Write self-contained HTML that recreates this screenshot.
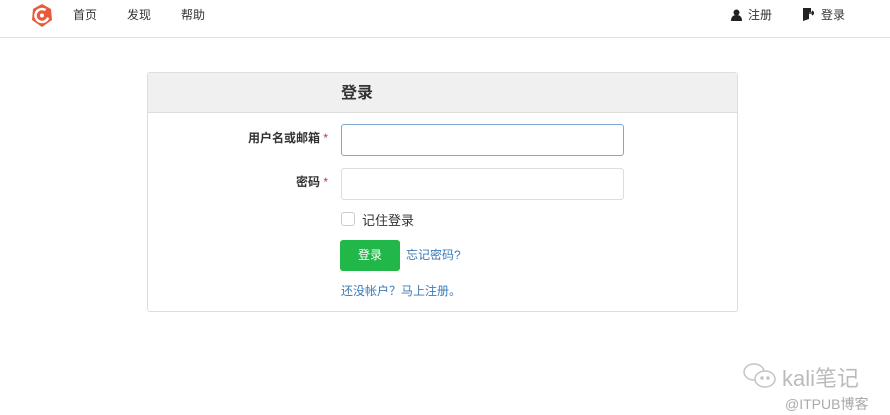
<!DOCTYPE html><html><head><meta charset="utf-8"><style>
*{margin:0;padding:0;box-sizing:border-box}
body{width:890px;height:415px;background:#fff;font-family:"Liberation Sans","Noto Sans CJK SC",sans-serif;font-size:12px;color:#333;position:relative;overflow:hidden}
.a{position:absolute}
.nav{top:0;left:0;width:890px;height:38px;border-bottom:1px solid #e2e2e2}
.card{left:147px;top:72px;width:591px;height:240px;border:1px solid #ddd;border-radius:3px}
.hd{height:40px;background:#f0f0f0;border-bottom:1px solid #ddd}
.inp{border:1px solid #ccc;border-radius:3px;width:283px;height:32px;left:341px}
.lab{font-weight:bold;font-size:12px;text-align:right;width:180px}
.lab b{color:#c33;font-weight:normal}
.link{color:#3a7ab8}
</style></head><body>
<div class="a nav"></div>
<svg class="a" style="left:31px;top:4px" width="22" height="23" viewBox="0 0 22 23"><polygon points="11,0 20,5 21,16 11,23 1,16 2,5" fill="#e85a3a"/><circle cx="11" cy="11.5" r="6.5" fill="none" stroke="#fff" stroke-width="2.5" stroke-dasharray="32 9" transform="rotate(20 11 11.5)"/><circle cx="11" cy="11.5" r="2" fill="#fff"/></svg>
<div class="a" style="left:73px;top:6px">首页</div>
<div class="a" style="left:127px;top:6px">发现</div>
<div class="a" style="left:181px;top:6px">帮助</div>
<svg class="a" style="left:731px;top:9px" width="11" height="12" viewBox="0 0 11 12"><circle cx="5.5" cy="3.5" r="3" fill="#222"/><path d="M0 12Q0 6 5.5 6Q11 6 11 12Z" fill="#222"/></svg>
<div class="a" style="left:748px;top:6px">注册</div>
<svg class="a" style="left:803px;top:8px" width="11" height="13" viewBox="0 0 11 13"><path d="M0 0H8V4H6V11L0 13Z" fill="#222"/><path d="M6 5H11M9 3L11 5L9 7" stroke="#222" stroke-width="1.5" fill="none"/></svg>
<div class="a" style="left:821px;top:6px">登录</div>
<div class="a card"><div class="hd"><div class="a" style="left:193px;top:6px;font-size:16px;font-weight:bold">登录</div></div></div>
<div class="a lab" style="left:148px;top:129px">用户名或邮箱<b> *</b></div>
<div class="a inp" style="top:124px;border-color:#7fa8d8"></div>
<div class="a lab" style="left:148px;top:173px">密码<b> *</b></div>
<div class="a inp" style="top:168px;border-color:#ddd"></div>
<div class="a" style="left:341px;top:212px;width:14px;height:14px;border:1px solid #ccc;border-radius:3px"></div>
<div class="a" style="left:362px;top:210px;font-size:13px">记住登录</div>
<div class="a" style="left:340px;top:240px;width:60px;height:31px;background:#22b849;border-radius:3px;color:#fff;text-align:center;line-height:31px">登录</div>
<div class="a link" style="left:406px;top:246px">忘记密码?</div>
<div class="a link" style="left:341px;top:282px">还没帐户？马上注册。</div>
<svg class="a" style="left:742px;top:362px" width="36" height="28" viewBox="0 0 36 28" fill="none" stroke="#c4c4c4" stroke-width="1.5"><ellipse cx="12" cy="10" rx="10" ry="8"/><ellipse cx="23" cy="17" rx="10" ry="8" fill="#fff"/><circle cx="20" cy="16" r="1" fill="#c4c4c4"/><circle cx="26" cy="16" r="1" fill="#c4c4c4"/></svg>
<div class="a" style="left:782px;top:361px;color:#bbb;font-size:22px">kali笔记</div>
<div class="a" style="left:785px;top:394px;color:#aaa;font-size:14px">@ITPUB博客</div>
</body></html>
